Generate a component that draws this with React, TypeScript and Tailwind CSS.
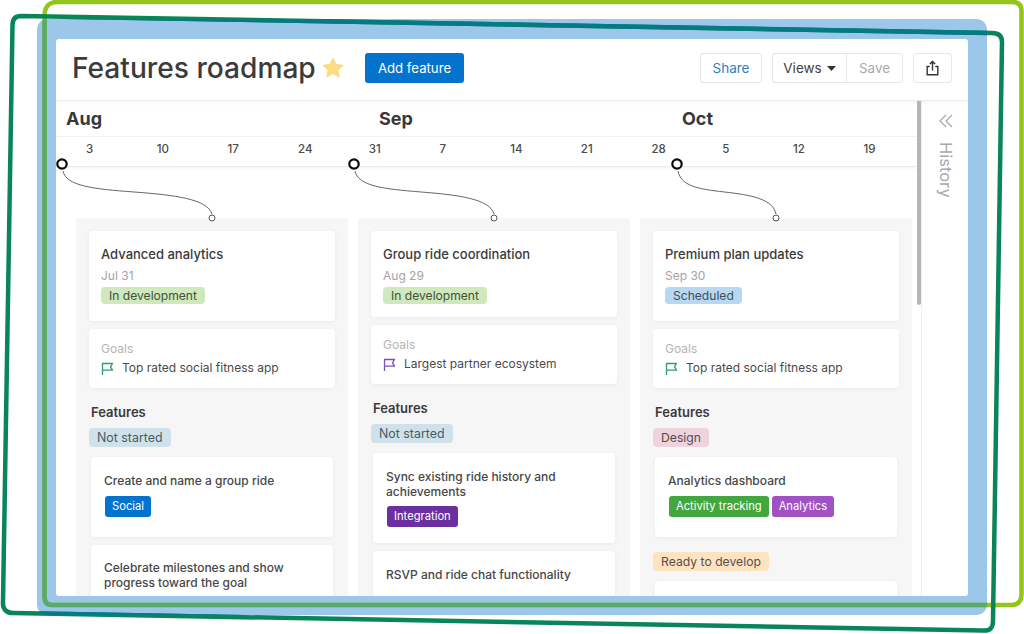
import React from "react";

const weeks = ["3", "10", "17", "24", "31", "7", "14", "21", "28", "5", "12", "19"];

function Pill({ children, className }: { children: React.ReactNode; className: string }) {
  return <span className={`flex w-fit items-center rounded-[4px] px-2 pt-px ${className}`}>{children}</span>;
}

function Tag({ children, className }: { children: React.ReactNode; className: string }) {
  return <span className={`flex h-[21px] w-fit items-center rounded-[3px] px-[7px] text-[11.2px] text-white ${className}`}>{children}</span>;
}

function Flag({ className }: { className: string }) {
  return (
    <svg width="13" height="13" viewBox="0 0 13 13" fill="none" stroke="currentColor" strokeWidth="1.3" className={`shrink-0 ${className}`}>
      <path d="M1.5 13V1.5h10L9.5 4.8l2 3.4h-10" strokeLinejoin="round" />
    </svg>
  );
}

function Summary({ title, date, status, statusClass, cardClass, goal, flagClass }: {
  title: string; date: string; status: string; statusClass: string; cardClass: string; goal: string; flagClass: string;
}) {
  return (
    <>
      <div className={`rounded-[4px] bg-white pl-3 pt-[15px] shadow-[0_1px_4px_rgba(0,0,0,0.05)] ${cardClass}`}>
        <div className="text-[13px] font-medium leading-[17px] text-[#3a3a3a]">{title}</div>
        <div className="mt-[5px] text-[12px] leading-[16px] text-[#a3a3a3]">{date}</div>
        <Pill className={`mt-[3px] h-[17px] text-[12.1px] ${statusClass}`}>{status}</Pill>
      </div>
      <div className="mt-2 h-[59px] rounded-[4px] bg-white pl-3 shadow-[0_1px_4px_rgba(0,0,0,0.05)]">
        <div className="pt-[12px] text-[12px] leading-[16px] text-[#b5b5b5]">Goals</div>
        <div className="mt-[3px] flex items-center gap-[8px] text-[12px] leading-[16px] text-[#4a4a4a]">
          <Flag className={flagClass} />
          <span>{goal}</span>
        </div>
      </div>
    </>
  );
}

function FeatureCard({ className, children }: { className: string; children: React.ReactNode }) {
  return (
    <div className={`mx-[2px] rounded-[4px] bg-white pl-[13px] pr-2 shadow-[0_1px_4px_rgba(0,0,0,0.05)] ${className}`}>
      {children}
    </div>
  );
}

function FeatureTitle({ children }: { children: React.ReactNode }) {
  return <div className="text-[12px] font-medium leading-[14.5px] text-[#474747]">{children}</div>;
}

function Heading() {
  return <div className="ml-[2px] mt-[15px] text-[13px] font-semibold leading-[18px] text-[#3a3a3a]">Features</div>;
}

function Connector({ x, w }: { x: number; w: number }) {
  const d = `M1 70C4 85 ${w * 0.21} 88 ${w * 0.48} 91C${w * 0.75} 94 ${w * 0.97} 98 ${w} 113`;
  return (
    <g transform={`translate(${x} 0)`}>
      <path d={d} fill="none" stroke="#555" strokeWidth="0.9" />
      <circle cx="0" cy="63" r="4.7" fill="#fff" stroke="#0a0a0a" strokeWidth="2.2" />
      <circle cx={w} cy="117" r="3" fill="#fff" stroke="#555" strokeWidth="1" />
    </g>
  );
}

export default function App() {
  return (
    <div className="relative h-[634px] w-[1024px] overflow-hidden bg-white pl-[37px] pt-[19px] font-['Inter',sans-serif]">
      <div className="h-[596px] w-[950px] rounded-[10px] bg-[#9cc7eb] px-[19px] py-[20px]">
        <div className="flex h-[557px] w-[912px] flex-col overflow-hidden rounded-[3px] bg-white">
          <header className="z-10 flex h-[62px] shrink-0 items-center border-b border-[#ececec] pb-[3px] pl-4 pr-4 shadow-[0_2px_4px_rgba(0,0,0,0.04)]">
            <h1 className="w-[243px] whitespace-nowrap pt-px text-[28.15px] font-[450] leading-none text-[#3b3b3b]">Features roadmap</h1>
            <svg width="24" height="24" viewBox="0 0 24 24" className="ml-[6px]" fill="#fbdc83" stroke="#fbdc83" strokeWidth="1.5" strokeLinejoin="round">
              <path d="M12 2.5l2.9 6.1 6.6.8-4.9 4.5 1.3 6.6L12 17.2l-5.9 3.3 1.3-6.6-4.9-4.5 6.6-.8z" />
            </svg>
            <button className="ml-[20px] h-[30px] w-[99px] rounded-[3px] bg-[#0473cd] pt-px text-[13.2px] text-white">Add feature</button>
            <div className="ml-auto flex items-center">
              <button className="h-[30px] w-[62px] rounded-[3px] border border-[#e6e6e6] text-[13.5px] text-[#2f82c4]">Share</button>
              <div className="ml-[10px] flex h-[30px] w-[131px] rounded-[3px] border border-[#e6e6e6]">
                <button className="flex w-[74px] items-center justify-center gap-[5px] border-r border-[#e6e6e6] text-[13.5px] text-[#3f3f3f]">
                  Views
                  <svg width="9" height="5" viewBox="0 0 9 5" fill="#333"><path d="M0 0h9L4.5 5z" /></svg>
                </button>
                <button className="flex-1 text-[13.5px] text-[#ababab]">Save</button>
              </div>
              <button className="ml-[10px] flex h-[30px] w-[39px] items-center justify-center rounded-[3px] border border-[#e6e6e6]">
                <svg width="13" height="16" viewBox="0 0 13 16" fill="none" stroke="#333" strokeWidth="1.4">
                  <path d="M3.7 6.5H1.2v8.3h10.6V6.5H9.3M6.5 10.5V1.5M3.8 4l2.7-2.6L9.2 4" />
                </svg>
              </button>
            </div>
          </header>

          <div className="flex min-h-0 flex-1">
            <main className="relative w-[861px] shrink-0 overflow-hidden">
              <div className="flex h-[36px] items-center border-b border-[#f4f4f4] text-[18px] font-bold text-[#383838]">
                <span className="w-[323px] pl-[10px]">Aug</span>
                <span className="w-[303px]">Sep</span>
                <span>Oct</span>
              </div>
              <div className="flex h-[30px] items-center border-b border-[#ececec] pl-[30px] shadow-[0_1px_3px_rgba(0,0,0,0.05)]">
                {weeks.map((w, i) => (
                  <span key={i} className="w-[70.7px] shrink-0 pb-[3px] text-[11.5px] font-medium text-[#4a4a4a]">{w}</span>
                ))}
              </div>

              <div className="ml-[20px] mt-[51px] grid w-[836px] grid-cols-[272px_272px_272px] gap-[10px]">
                <section className="h-[400px] rounded-[3px] bg-[#f6f6f6] px-[13px] pt-[13px]">
                  <Summary title="Advanced analytics" date="Jul 31" status="In development" statusClass="bg-[#cfe8bc] text-[#44503c]" cardClass="h-[90px]" goal="Top rated social fitness app" flagClass="text-[#2f9a6f]" />
                  <Heading />
                  <Pill className="mt-[7px] h-[19px] bg-[#cfe2ec] text-[12.4px] text-[#4c5a62]">Not started</Pill>
                  <FeatureCard className="mt-[10px] h-[80px] pt-[17px]">
                    <FeatureTitle>Create and name a group ride</FeatureTitle>
                    <div className="ml-px mt-[7px] flex"><Tag className="bg-[#0473cd]">Social</Tag></div>
                  </FeatureCard>
                  <FeatureCard className="mt-2 h-[80px] pt-[16px]">
                    <FeatureTitle>Celebrate milestones and show progress toward the goal</FeatureTitle>
                  </FeatureCard>
                </section>

                <section className="h-[400px] rounded-[3px] bg-[#f6f6f6] px-[13px] pt-[13px]">
                  <Summary title="Group ride coordination" date="Aug 29" status="In development" statusClass="bg-[#cfe8bc] text-[#44503c]" cardClass="h-[86px]" goal="Largest partner ecosystem" flagClass="text-[#7c4fc0]" />
                  <Heading />
                  <Pill className="mt-[7px] h-[19px] bg-[#cfe2ec] text-[12.4px] text-[#4c5a62]">Not started</Pill>
                  <FeatureCard className="mt-[10px] h-[90px] pt-[17px]">
                    <FeatureTitle>Sync existing ride history and achievements</FeatureTitle>
                    <div className="ml-px mt-[7px] flex"><Tag className="bg-[#6c2fa0]">Integration</Tag></div>
                  </FeatureCard>
                  <FeatureCard className="mt-2 h-[80px] pt-[17px]">
                    <FeatureTitle>RSVP and ride chat functionality</FeatureTitle>
                  </FeatureCard>
                </section>

                <section className="h-[400px] rounded-[3px] bg-[#f6f6f6] px-[13px] pt-[13px]">
                  <Summary title="Premium plan updates" date="Sep 30" status="Scheduled" statusClass="bg-[#b7d8f0] text-[#3d4f5e]" cardClass="h-[90px]" goal="Top rated social fitness app" flagClass="text-[#2f9a6f]" />
                  <Heading />
                  <Pill className="mt-[7px] h-[19px] bg-[#ecd3dc] text-[12.2px] text-[#5a4a50]">Design</Pill>
                  <FeatureCard className="mt-[10px] h-[80px] pt-[17px]">
                    <FeatureTitle>Analytics dashboard</FeatureTitle>
                    <div className="ml-px mt-[7px] flex gap-[3px]">
                      <Tag className="bg-[#43a740]">Activity tracking</Tag>
                      <Tag className="bg-[#a052c4]">Analytics</Tag>
                    </div>
                  </FeatureCard>
                  <Pill className="mt-[15px] h-[19px] bg-[#fde3c2] text-[12.2px] text-[#5a5045]">Ready to develop</Pill>
                  <FeatureCard className="mt-[10px] h-[60px]"><span /></FeatureCard>
                </section>
              </div>

              <svg width="861" height="130" viewBox="0 0 861 130" className="absolute left-0 top-0" fill="none">
                <Connector x={6} w={150} />
                <Connector x={298} w={140} />
                <Connector x={621} w={99} />
              </svg>
            </main>

            <div className="relative w-[5px] shrink-0 border-r border-[#f0f0f0]">
              <div className="h-[204px] w-[4px] rounded-b-[2px] bg-[#b6b6b6]" />
            </div>

            <aside className="flex flex-1 flex-col items-center pl-[2px] pt-[13px] text-[#a9a9a9]">
              <svg width="14" height="14" viewBox="0 0 14 14" fill="none" stroke="#a9a9a9" strokeWidth="1.3">
                <path d="M7 1L1 7l6 6M13 1L7 7l6 6" />
              </svg>
              <span className="mt-[14px] text-[16.5px] leading-none [writing-mode:vertical-rl]">History</span>
            </aside>
          </div>
        </div>
      </div>

      <svg width="1024" height="634" viewBox="0 0 1024 634" className="pointer-events-none absolute left-0 top-0" fill="none">
        <defs>
          <clipPath id="blue">
            <rect x="37" y="19" width="950" height="596" rx="10" />
          </clipPath>
        </defs>
        <path d="M44.5 16C44.5 7 49 2 57 2H1012C1018 2 1021.5 5 1021.5 11V594C1021.5 601 1018 605 1011 605H52C47 605 44.5 602 44.5 597Z" stroke="#94c51c" strokeWidth="4.6" />
        <path d="M44.5 16C44.5 7 49 2 57 2H1012C1018 2 1021.5 5 1021.5 11V594C1021.5 601 1018 605 1011 605H52C47 605 44.5 602 44.5 597Z" stroke="#5aa96e" strokeWidth="4.6" clipPath="url(#blue)" />
        <path d="M21 16L992 33C999 33 1002 36 1002 42L993 621C993 628 990 631 983 630.5L13 613C6 613 2.5 609 3 602L12.5 25C12.5 19 15 16 21 16Z" stroke="#0a8558" strokeWidth="4.5" />
        <path d="M21 16L992 33C999 33 1002 36 1002 42L993 621C993 628 990 631 983 630.5L13 613C6 613 2.5 609 3 602L12.5 25C12.5 19 15 16 21 16Z" stroke="#047a84" strokeWidth="4.5" clipPath="url(#blue)" />
      </svg>
    </div>
  );
}
